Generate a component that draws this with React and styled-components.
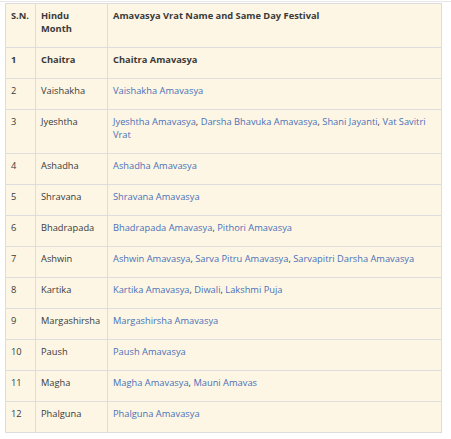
import React from 'react';
import styled, { createGlobalStyle } from 'styled-components';

const GlobalStyle = createGlobalStyle`
  body {
    margin: 0;
    background: #fff;
    font-family: "Open Sans", Arial, sans-serif;
  }
`;

const Page = styled.div`
  width: 451px;
  height: 439px;
  box-sizing: border-box;
  border-top: 1px solid #e6e6e6;
  border-bottom: 1px solid #e6e6e6;
  margin-top: 1px;
  padding: 1px 0 0 5px;
`;

const Table = styled.table`
  width: 437px;
  table-layout: fixed;
  border-collapse: collapse;
  background: #fdf6e4;
  font-size: 9.3px;
  line-height: 13px;
  color: #3a3a3a;
`;

const Col = styled.col`
  width: ${(p) => p.$w};
`;

const Cell = styled.td`
  border: 1px solid #ddd;
  padding: 5px 5px 12px 5px;
  vertical-align: top;
  text-align: left;
  font-weight: ${(p) => (p.$bold ? 700 : 400)};
`;

const Link = styled.span`
  color: #4a70b8;
`;

const rows = [
  ['Vaishakha', ['Vaishakha Amavasya']],
  ['Jyeshtha', ['Jyeshtha Amavasya', 'Darsha Bhavuka Amavasya', 'Shani Jayanti', 'Vat Savitri Vrat']],
  ['Ashadha', ['Ashadha Amavasya']],
  ['Shravana', ['Shravana Amavasya']],
  ['Bhadrapada', ['Bhadrapada Amavasya', 'Pithori Amavasya']],
  ['Ashwin', ['Ashwin Amavasya', 'Sarva Pitru Amavasya', 'Sarvapitri Darsha Amavasya']],
  ['Kartika', ['Kartika Amavasya', 'Diwali', 'Lakshmi Puja']],
  ['Margashirsha', ['Margashirsha Amavasya']],
  ['Paush', ['Paush Amavasya']],
  ['Magha', ['Magha Amavasya', 'Mauni Amavas']],
  ['Phalguna', ['Phalguna Amavasya']],
];

export default function App() {
  return (
    <>
      <GlobalStyle />
      <Page>
        <Table>
          <colgroup>
            <Col $w="30px" />
            <Col $w="72px" />
            <Col $w="auto" />
          </colgroup>
          <tbody>
            <tr>
              <Cell $bold>S.N.</Cell>
              <Cell $bold>Hindu Month</Cell>
              <Cell $bold>Amavasya Vrat Name and Same Day Festival</Cell>
            </tr>
            <tr>
              <Cell $bold>1</Cell>
              <Cell $bold>Chaitra</Cell>
              <Cell $bold>Chaitra Amavasya</Cell>
            </tr>
            {rows.map(([month, names], i) => (
              <tr key={month}>
                <Cell>{i + 2}</Cell>
                <Cell>{month}</Cell>
                <Cell>
                  {names.map((n, j) => (
                    <React.Fragment key={n}>
                      <Link>{n}</Link>
                      {j < names.length - 1 ? ', ' : ''}
                    </React.Fragment>
                  ))}
                </Cell>
              </tr>
            ))}
          </tbody>
        </Table>
      </Page>
    </>
  );
}
